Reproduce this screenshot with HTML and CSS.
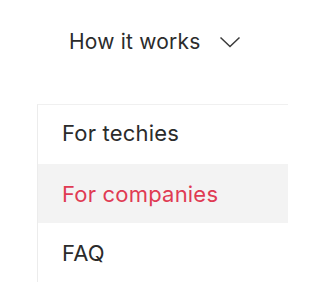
FILE: index.html
```html
<!DOCTYPE html>
<html>
<head>
<meta charset="utf-8">
<link rel="stylesheet" href="styles.css">
</head>
<body>
<div class="nav">
  <span class="nav-label">How it works</span>
  <svg class="chev" width="22" height="12" viewBox="0 0 22 12"><polyline points="1.5,1.5 11,10.5 20.5,1.5" fill="none" stroke="#3a3a3a" stroke-width="1.5"/></svg>
</div>
<ul class="menu">
  <li class="item">For techies</li>
  <li class="item active">For companies</li>
  <li class="item">FAQ</li>
</ul>
</body>
</html>
```
FILE: styles.css
```css
html, body {
  margin: 0;
  padding: 0;
  background: #ffffff;
}
body {
  font-family: Inter, "Noto Sans", sans-serif;
  color: #2b2b2b;
  width: 288px;
  height: 288px;
  overflow: hidden;
}
.nav {
  display: flex;
  align-items: center;
  padding: 30px 0 0 69px;
  height: 24px;
}
.nav-label {
  font-size: 21px;
  line-height: 24px;
  letter-spacing: 0.2px;
}
.chev {
  margin-left: 19px;
  margin-top: -1px;
}
.menu {
  list-style: none;
  margin: 50px 0 0 37px;
  padding: 0;
  width: 250px;
  border-top: 1px solid #f0f0f0;
  border-left: 1px solid #ececec;
}
.item {
  font-size: 22px;
  line-height: 24px;
  height: 24px;
  padding: 18px 0 17px 24px;
  letter-spacing: 0.2px;
}
.item:first-child {
  padding-top: 16px;
  padding-bottom: 19px;
}
.item.active {
  background: #f3f3f3;
  color: #e03b53;
}
```
